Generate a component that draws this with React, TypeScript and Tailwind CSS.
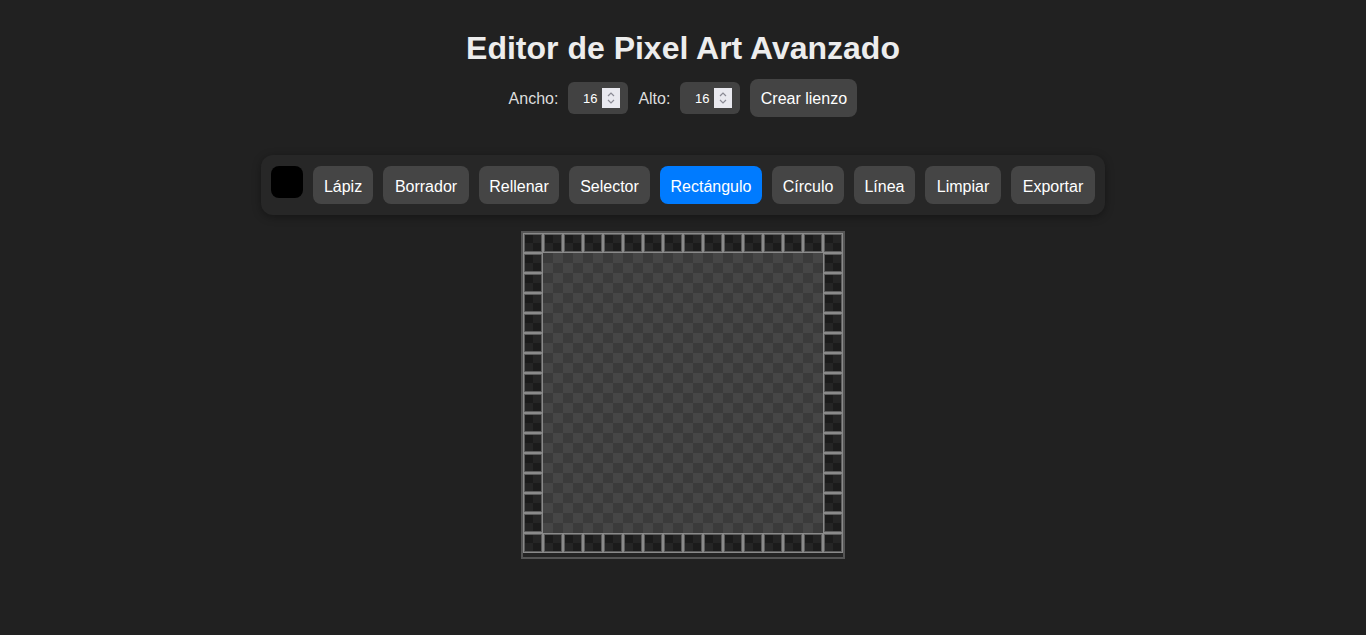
import React from 'react';

const tools = [
  { label: 'Lápiz', w: 'w-[60px]' },
  { label: 'Borrador', w: 'w-[86px]' },
  { label: 'Rellenar', w: 'w-[80px]' },
  { label: 'Selector', w: 'w-[81px]' },
  { label: 'Rectángulo', w: 'w-[102px]', active: true },
  { label: 'Círculo', w: 'w-[72px]' },
  { label: 'Línea', w: 'w-[61px]' },
  { label: 'Limpiar', w: 'w-[76px]' },
  { label: 'Exportar', w: 'w-[84px]' },
];

const SIZE = 16;

const NumberBox: React.FC<{ value: number }> = ({ value }) => (
  <div className="flex h-8 w-[60px] items-center justify-end gap-[5px] rounded-md bg-[#424242] pr-2 text-[13px] text-white">
    <span className="pt-[2px]">{value}</span>
    <span className="flex h-5 w-[18px] items-center justify-center bg-[#e9e9ef]">
      <svg width="10" height="16" viewBox="0 0 10 16" fill="none" stroke="#8a8a94" strokeWidth="1.2">
        <path d="M2 6 L5 3 L8 6" />
        <path d="M2 10 L5 13 L8 10" />
      </svg>
    </span>
  </div>
);

const Cell: React.FC<{ edge: boolean }> = ({ edge }) =>
  edge ? (
    <div className="grid h-5 w-5 grid-cols-2 grid-rows-2 border border-[#8a8a8a] shadow-[inset_0_0_0_1px_#5c5c5c]">
      <div className="m-[1px] mr-0 mb-0 bg-[#1b1b1b]" />
      <div className="m-[1px] ml-0 mb-0 bg-[#252525]" />
      <div className="m-[1px] mr-0 mt-0 bg-[#252525]" />
      <div className="m-[1px] ml-0 mt-0 bg-[#1b1b1b]" />
    </div>
  ) : (
    <div className="grid h-5 w-5 grid-cols-2 grid-rows-2">
      <div className="bg-[#3b3b3b]" />
      <div className="bg-[#464646]" />
      <div className="bg-[#464646]" />
      <div className="bg-[#3b3b3b]" />
    </div>
  );

export default function App() {
  const cells = [];
  for (let r = 0; r < SIZE; r++) {
    for (let c = 0; c < SIZE; c++) {
      const edge = r === 0 || c === 0 || r === SIZE - 1 || c === SIZE - 1;
      cells.push(<Cell key={`${r}-${c}`} edge={edge} />);
    }
  }

  return (
    <div className="flex min-h-screen flex-col items-center bg-[#212121] font-['Liberation_Sans',Arial,sans-serif] text-white">
      <h1 className="mt-7 text-[32px] font-bold leading-10 text-[#ededed]">Editor de Pixel Art Avanzado</h1>

      <div className="mt-[11px] flex items-center gap-[10px] text-[16px]">
        <span className="pt-[2px] text-[#dddddd]">Ancho:</span>
        <NumberBox value={16} />
        <span className="pt-[2px] text-[#dddddd]">Alto:</span>
        <NumberBox value={16} />
        <button className="h-[38px] w-[107px] rounded-lg bg-[#444444] pt-[2px] text-white">Crear lienzo</button>
      </div>

      <div className="mt-[38px] flex items-start gap-[10px] rounded-xl bg-[#272727] p-[10px] pt-[11px] pb-[11px] shadow-[0_2px_8px_rgba(0,0,0,0.35)]">
        <div className="h-8 w-8 rounded-lg bg-black" />
        {tools.map((t) => (
          <button
            key={t.label}
            className={`h-[38px] ${t.w} rounded-lg pt-[3px] text-[16px] ${t.active ? 'bg-[#007bff]' : 'bg-[#454545]'} text-white`}
          >
            {t.label}
          </button>
        ))}
      </div>

      <div className="mt-4 border-2 border-[#555555] bg-[#242424] pb-1">
        <div className="grid grid-cols-[repeat(16,20px)]">{cells}</div>
      </div>
    </div>
  );
}
